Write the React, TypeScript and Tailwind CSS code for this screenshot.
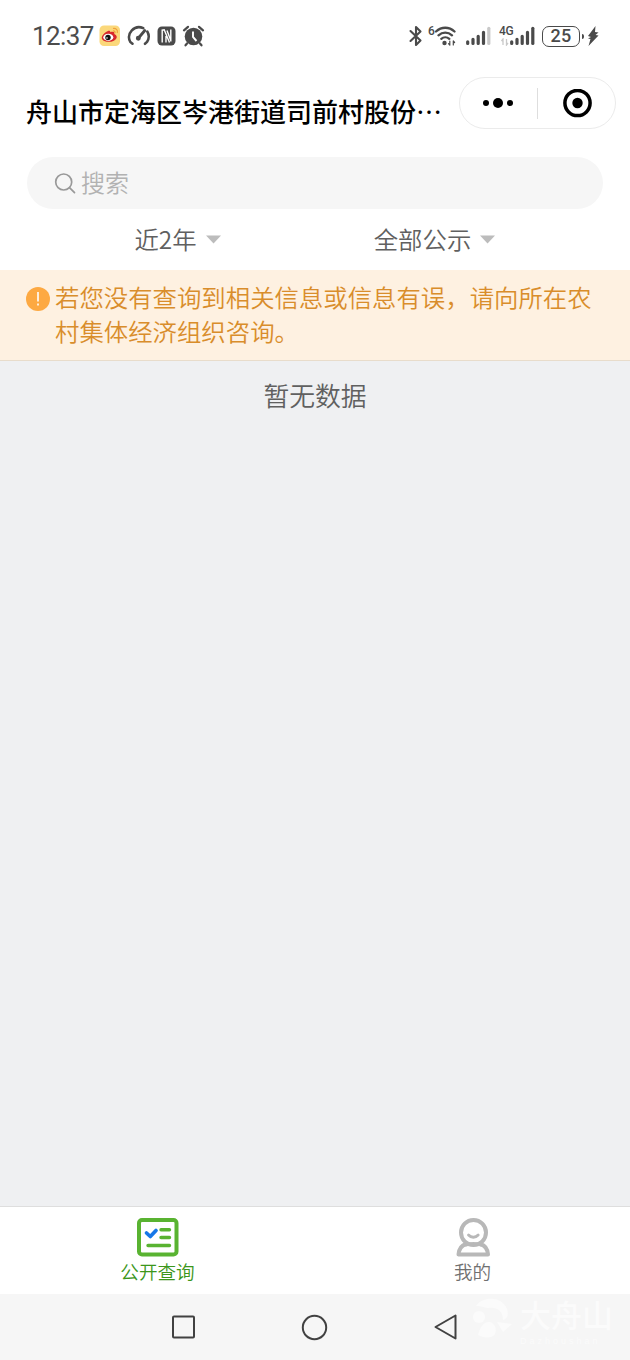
import React from 'react';

const SignalBars = ({ lastDim = false }: { lastDim?: boolean }) => (
    <svg width="25" height="20" viewBox="0 0 25 20" stroke="#4a4a4a" strokeWidth="3.2" strokeLinecap="round">
        <path d="M1.7 15.8V17.4M7 13.3V17.4M12.2 10.3V17.4M17.5 6.3V17.4" />
        <path d="M22.8 2.3V17.4" stroke={lastDim ? '#c9c9c9' : '#4a4a4a'} />
    </svg>
);

const StatusBar = () => (
    <div className="flex h-[72px] items-center justify-between pl-[32px] pr-[31px]">
        <div className="flex items-center">
            <span className="w-[67px] font-[Roboto] text-[26px] leading-[30px] tracking-[-0.6px] text-[#4c4c4c]">12:37</span>
            <svg width="22" height="22" viewBox="0 0 22 22">
                <rect x="0.5" y="0.5" width="20.5" height="20.5" rx="4.5" fill="#fbd87b" />
                <path d="M8.5 6.2c1.8-.9 3-.3 2.8 1 3-1.1 4.6-.2 4 1.7 5.2 2.2 1.6 7.9-5.6 7.9C4 16.8 1.3 13.5 3.5 10.4 4.7 8.6 6.5 7 8.5 6.2z" fill="#d8282c" />
                <ellipse cx="9.3" cy="12.3" rx="5" ry="3.6" fill="#fff" />
                <circle cx="9" cy="12.5" r="2.7" fill="#111" />
                <circle cx="8" cy="13" r="0.8" fill="#fff" />
                <path d="M14 3.5c3-.5 5 1.5 4.3 4.5M14 6c1.5-.2 2.3.7 2 2" fill="none" stroke="#f0a23a" strokeWidth="1.2" />
            </svg>
            <svg className="ml-[6px]" width="24" height="22" viewBox="0 0 24 22" fill="none" stroke="#4a4a4a" strokeWidth="2.5" strokeLinecap="round">
                <path d="M5.5 18.8L3.3 17A10 10 0 0 1 16.3 3.2" />
                <path d="M20.3 6.5A10 10 0 0 1 20 17L18 18.8" />
                <path d="M17.8 5.5L11.5 13" strokeWidth="2.8" />
                <circle cx="11.3" cy="13.3" r="1.2" fill="#4a4a4a" />
            </svg>
            <svg className="ml-[6px]" width="19" height="20" viewBox="0 0 19 20">
                <rect x="0.5" y="0.5" width="18" height="19" rx="4.5" fill="#4a4a4a" />
                <path d="M5.2 16.5V4l2-.3 5.3 12.8M9 16.5V10M10 4.5l3.8 10M13.8 3.5v12" fill="none" stroke="#fff" strokeWidth="1.4" />
            </svg>
            <svg className="ml-[6px]" width="23" height="22" viewBox="0 0 23 22">
                <circle cx="11.5" cy="11.5" r="8.8" fill="#4a4a4a" />
                <path d="M2 5.3L6 1.8M17 1.8l4 3.5M5 18.5l-1.5 1.8M18 18.5l1.5 1.8" stroke="#4a4a4a" strokeWidth="2.2" strokeLinecap="round" />
                <path d="M11 6.5v5.5l3.5 4" fill="none" stroke="#fff" strokeWidth="1.9" />
            </svg>
        </div>
        <div className="flex items-center text-[#4a4a4a]">
            <svg width="14" height="22" viewBox="0 0 14 22" fill="none" stroke="#4a4a4a" strokeWidth="2.1" strokeLinejoin="round" strokeLinecap="round">
                <path d="M1.5 6L11.5 15.5 7 20V2l4.500 4.500L1.500 16" />
            </svg>
            <span className="ml-[5px] h-5 w-[6px] font-[Roboto] text-[12px] font-medium leading-[11px]">6</span>
            <svg width="22" height="22" viewBox="0 0 22 22" fill="none" stroke="#4a4a4a" strokeWidth="2.3" strokeLinecap="round">
                <path d="M2 6.5C7.5 1.5 15 1.5 20.5 6.5M4.5 10.3c4-3.7 9.5-3.7 13.5 0M7.3 13.8c2.3-2 5.7-2 8 0" />
                <circle cx="10.5" cy="18" r="2.2" fill="#4a4a4a" stroke="none" />
                <path d="M15.8 16v4M14.5 18.7l1.3 1.5M19.3 20v-4M20.6 17.5l-1.3-1.5" strokeWidth="1.2" />
            </svg>
            <div className="ml-[10px] flex">
                <SignalBars lastDim />
            </div>
            <div className="ml-[8px] flex">
                <div className="flex w-[11px] flex-col">
                    <span className="w-[15px] font-[Roboto] text-[12px] font-medium leading-[11px] tracking-[-0.3px]">4G</span>
                    <svg className="ml-[2px] mt-[1px]" width="8" height="8" viewBox="0 0 8 8" fill="none" stroke="#c9c9c9" strokeWidth="1.3">
                        <path d="M2 7V1L.5 3M5.5 1v6L7 5" />
                    </svg>
                </div>
                <SignalBars />
            </div>
            <div className="ml-[7px] flex h-[21px] w-[38px] items-center justify-center rounded-[7px] border-[1.5px] border-[#4a4a4a] font-[Roboto] text-[18px] font-medium leading-none tracking-[0.3px]">
                25
            </div>
            <div className="ml-[2px] h-[5px] w-[2px] rounded-r bg-[#4a4a4a]" />
            <svg className="ml-[3px]" width="12" height="22" viewBox="0 0 12 22" fill="#4a4a4a">
                <path d="M8.5 1L1 11l3 1-3 1.5L3.5 14 1.5 21 11.5 10.5 8.5 10l3-2.5L8 7z" />
            </svg>
        </div>
    </div>
);

const Capsule = () => (
    <div className="flex h-[52px] w-[157px] shrink-0 items-center rounded-full border border-[#ebebeb]">
        <div className="flex w-[77px] items-center justify-center gap-1 pr-[2px]">
            <i className="size-[6px] rounded-full bg-black" />
            <i className="size-[10px] rounded-full bg-black" />
            <i className="size-[6px] rounded-full bg-black" />
        </div>
        <div className="h-[31px] w-px bg-[#dedede]" />
        <div className="flex flex-1 items-center justify-center pl-[2px]">
            <svg width="29" height="29" viewBox="0 0 29 29">
                <circle cx="14.5" cy="14" r="12.6" fill="none" stroke="#000" strokeWidth="3.5" />
                <circle cx="14.5" cy="14" r="5.2" />
            </svg>
        </div>
    </div>
);

const Filter = ({ label }: { label: string }) => (
    <div className="flex flex-1 items-center justify-center gap-[9px] text-[24.4px] font-[350] leading-[36px] text-[#606060]">
        <span>{label}</span>
        <svg className="mt-[2px]" width="15" height="9" viewBox="0 0 15 9" fill="#bcbcbc">
            <path d="M0 .5h15L7.5 8.5z" />
        </svg>
    </div>
);

const TabBar = () => (
    <nav className="flex h-[88px] border-t border-[#dedede] bg-white text-[18.6px] font-[350] leading-[26px]">
        <div className="flex flex-1 flex-col items-center pt-[11px] text-[#3c961b]">
            <svg width="42" height="39" viewBox="0 0 42 39" fill="none" strokeLinecap="round" strokeLinejoin="round">
                <rect x="2" y="2" width="37.5" height="34.5" rx="3" stroke="#59b331" strokeWidth="4" />
                <path d="M24 11.8h8.5M24 19.5h8.5M11 27.5h21.5" stroke="#59b331" strokeWidth="3.4" />
                <path d="M9.5 15l3.8 3.5 5.7-6" stroke="#1677e8" strokeWidth="3.7" />
            </svg>
            <span className="mt-[1px]">公开查询</span>
        </div>
        <div className="flex flex-1 flex-col items-center pt-[11px] text-[#707070]">
            <svg width="34" height="39" viewBox="0 0 34 39" fill="none" stroke="#b8b8b8" strokeWidth="4" strokeLinejoin="round">
                <circle cx="17.5" cy="14.5" r="12.5" />
                <path d="M10 26C5 27.5 3 31 2.5 36.5h29.5c-.5-5.5-2.5-9-7.5-10.5" />
                <path d="M9 27.5c5-2.3 12-2.3 17 0" strokeWidth="3" />
                <path d="M12.5 17c2.7 3 7 3 9.7 0" strokeWidth="2.8" strokeLinecap="round" />
            </svg>
            <span className="mt-[1px]">我的</span>
        </div>
    </nav>
);

const SystemNav = () => (
    <div className="relative h-[66px] bg-[#f6f6f6]">
        <div className="flex h-full items-center pl-[171px]">
            <svg width="25" height="26" viewBox="0 0 25 26" fill="none" stroke="#414141" strokeWidth="2">
                <rect x="2" y="2.5" width="21" height="21" rx="1" />
            </svg>
            <svg className="ml-[105px]" width="27" height="27" viewBox="0 0 27 27" fill="none" stroke="#414141" strokeWidth="2">
                <circle cx="13.5" cy="13.5" r="11.7" />
            </svg>
            <svg className="ml-[105px]" width="26" height="28" viewBox="0 0 26 28" fill="none" stroke="#414141" strokeWidth="2" strokeLinejoin="round">
                <path d="M22.5 2.5v23L2.5 14z" />
            </svg>
        </div>
        <div className="absolute right-[16px] top-[3px] flex items-start gap-[7px] whitespace-nowrap text-[#fbfbfb]">
            <svg width="41" height="42" viewBox="0 0 41 42" fill="currentColor">
                <path d="M4 9C11-1 30-1 35 12c2 7 0 10-4 11 0-9-6-13-14-12-3 .5-6-2-13-2z" />
                <circle cx="7" cy="20" r="6" />
                <path d="M6 38c2-8 6-14 12-13 7 2 8 13 1 15-5 1-9 0-13-2zM25 25l15 2-9 8z" />
            </svg>
            <div className="flex w-[94px] flex-col">
                <span className="text-[31px] font-medium leading-[34px]">大舟山</span>
                <span className="mt-[5px] font-['Liberation_Sans'] text-[9px] leading-[10px] tracking-[3px]">Dazhoushan</span>
            </div>
        </div>
    </div>
);

export default function App() {
    return (
        <div className="flex h-[1360px] w-[630px] flex-col overflow-hidden bg-white font-['Noto_Sans_CJK_SC',sans-serif]">
            <StatusBar />
            <header className="flex h-[85px] items-start justify-between pl-[26px] pr-[14px] pt-[5px]">
                <h1 className="whitespace-nowrap pt-[15px] text-[26px] font-medium leading-[38px] text-black">
                    舟山市定海区岑港街道司前村股份<span className="font-normal">⋯</span>
                </h1>
                <Capsule />
            </header>
            <div className="mx-[27px] flex h-[52px] items-center rounded-full bg-[#f6f6f6] pl-[27px]">
                <svg width="23" height="23" viewBox="0 0 23 23" fill="none" stroke="#999" strokeWidth="1.7">
                    <circle cx="9.7" cy="10" r="8" />
                    <path d="M15.5 15.7l5 5" strokeLinecap="round" />
                </svg>
                <span className="-mt-[2px] ml-[4px] text-[24px] font-[350] leading-[36px] text-[#b2b2b2]">搜索</span>
            </div>
            <div className="flex h-[61px] items-center pb-[2px] pl-[49px] pr-[67px]">
                <Filter label="近2年" />
                <Filter label="全部公示" />
            </div>
            <div className="flex h-[91px] items-start border-b border-[#e8dccb] bg-[#fef1e1] pl-[26px] pt-[10px]">
                <svg className="mt-[7px] shrink-0" width="24" height="24" viewBox="0 0 24 24">
                    <circle cx="12" cy="12" r="12" fill="#fda942" />
                    <path d="M12 5v9.5M12 16.5v2" stroke="#fff" strokeWidth="1.6" />
                </svg>
                <p className="ml-[5px] w-[540px] text-[24.4px] font-[350] leading-[34px] text-[#d98d2b]">
                    若您没有查询到相关信息或信息有误，请向所在农
                    <br />
                    村集体经济组织咨询。
                </p>
            </div>
            <main className="flex-1 bg-[#eff0f2] pt-[15px] text-center text-[25.8px] font-[350] leading-[38px] text-[#606060]">暂无数据</main>
            <TabBar />
            <SystemNav />
        </div>
    );
}
